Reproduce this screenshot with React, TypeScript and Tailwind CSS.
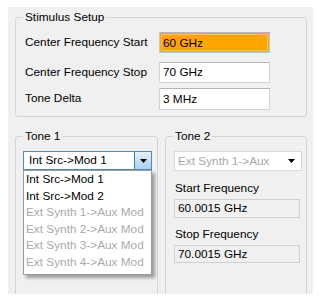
import { ReactNode } from "react";

function Group({ title, className, inner, children }: { title: string; className: string; inner: string; children: ReactNode }) {
    return (
        <fieldset className={`border border-[#d5d5d5] rounded-[3px] ${className}`}>
            <legend className="ml-[7px] px-[2px] leading-[14px] text-black">{title}</legend>
            <div className={inner}>{children}</div>
        </fieldset>
    );
}

function Arrow() {
    return (
        <svg width="7" height="4" viewBox="0 0 7 4" className="block">
            <path d="M0 0 H7 L3.5 4 Z" fill="#000" />
        </svg>
    );
}

const items = [
    { label: "Int Src->Mod 1", on: true },
    { label: "Int Src->Mod 2", on: true },
    { label: "Ext Synth 1->Aux Mod", on: false },
    { label: "Ext Synth 2->Aux Mod", on: false },
    { label: "Ext Synth 3->Aux Mod", on: false },
    { label: "Ext Synth 4->Aux Mod", on: false },
];

export default function App() {
    return (
        <div className="w-[324px] h-[303px] bg-white pt-[7px] pl-[8px] text-[11.8px] font-['Liberation_Sans',Arial,sans-serif]">
            <div className="w-[305px] h-[287px] bg-[#f0f0f0] overflow-hidden relative">

                {/* stimulus setup */}
                <Group title="Stimulus Setup" className="ml-[7px] mt-[3px] w-[292px] h-[107px]" inner="pl-[9px] pt-[8px]">
                    <div className="flex items-center h-[21px]">
                        <span className="w-[134px]">Center Frequency Start</span>
                        <div className="w-[111px] h-[21px] border border-[#c9c9c9] border-t-[#b5b5b5] bg-[#ffa500] p-[1px]">
                            <div className="h-full border border-[#ffc35a] pl-[1px] leading-[17px]">60 GHz</div>
                        </div>
                    </div>
                    <div className="flex items-center h-[21px] mt-[9px]">
                        <span className="w-[134px]">Center Frequency Stop</span>
                        <div className="w-[111px] h-[21px] border border-[#d4d4d4] border-t-[#b5b5b5] bg-white pl-[3px] leading-[19px]">70 GHz</div>
                    </div>
                    <div className="flex items-center h-[22px] mt-[5px]">
                        <span className="w-[134px]">Tone Delta</span>
                        <div className="w-[111px] h-[22px] border border-[#d4d4d4] border-t-[#b5b5b5] bg-white pl-[3px] leading-[20px]">3 MHz</div>
                    </div>
                </Group>

                <div className="flex gap-[7px] ml-[7px] mt-[12px]">
                    {/* tone 1 */}
                    <Group title="Tone 1" className="w-[143px] h-[200px]" inner="pl-[7px] pt-[8px]">
                        <div className="relative w-[129px]">
                            <div className="flex h-[19px] border border-[#5a87ad] bg-white">
                                <span className="flex-1 pl-[5px] leading-[17px]">{"Int Src->Mod 1"}</span>
                                <div className="w-[17px] h-full border-l border-[#3c7fb1] bg-gradient-to-b from-[#e3f1fc] to-[#a9d2f2] flex items-center justify-center">
                                    <Arrow />
                                </div>
                            </div>
                            <div className="absolute left-0 top-[19px] w-[129px] bg-white border border-[#9b9b9b] pb-[3px] shadow-[3px_3px_3px_rgba(0,0,0,0.35)] z-10">
                                {items.map((it) => (
                                    <div key={it.label} className={`pl-[2px] h-[16.6px] leading-[16.6px] ${it.on ? "text-black" : "text-[#aaaaaa]"}`}>
                                        {it.label}
                                    </div>
                                ))}
                            </div>
                        </div>
                    </Group>

                    {/* tone 2 */}
                    <Group title="Tone 2" className="w-[142px] h-[200px]" inner="pl-[8px] pt-[8px]">
                        <div className="flex items-center h-[20px] w-[128px] border border-[#dadada] bg-white">
                            <span className="flex-1 pl-[3px] text-[#a8a8a8] leading-[18px]">{"Ext Synth 1->Aux"}</span>
                            <div className="w-[17px] flex justify-center pr-[2px]">
                                <Arrow />
                            </div>
                        </div>
                        <div className="mt-[10px] leading-[14px] pl-[1px]">Start Frequency</div>
                        <div className="mt-[4px] w-[126px] h-[19px] border border-[#d0d0d0] pl-[3px] leading-[17px]">60.0015 GHz</div>
                        <div className="mt-[9px] leading-[14px] pl-[1px]">Stop Frequency</div>
                        <div className="mt-[4px] w-[126px] h-[18px] border border-[#d0d0d0] pl-[3px] leading-[16px]">70.0015 GHz</div>
                    </Group>
                </div>
            </div>
        </div>
    );
}
